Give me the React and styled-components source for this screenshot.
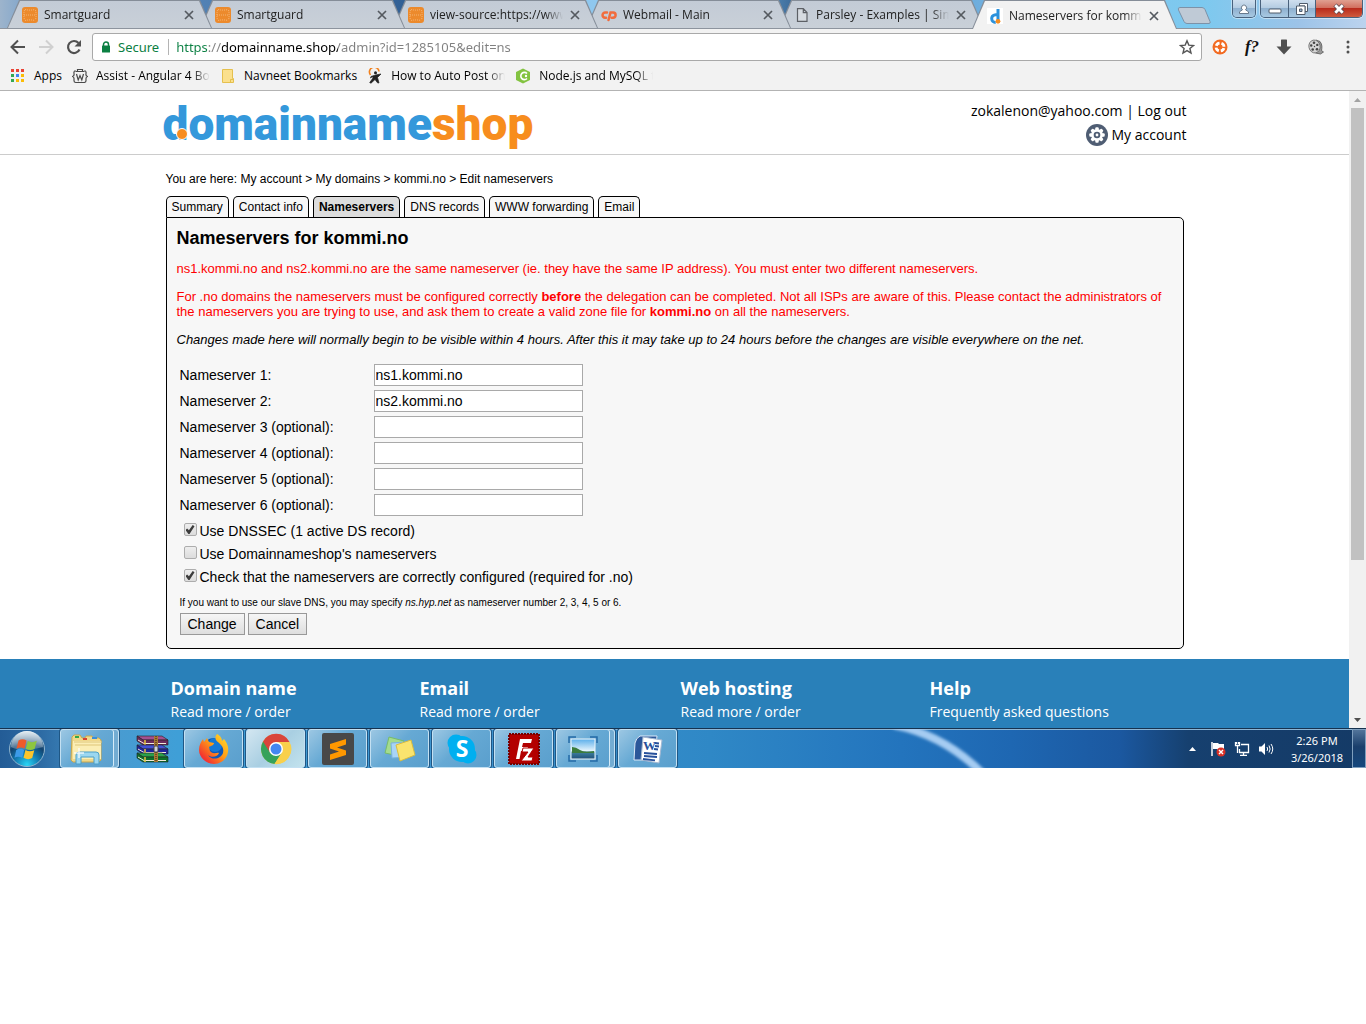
import React, { useState } from "react";
import styled, { createGlobalStyle, css } from "styled-components";

const ui = '"Open Sans", "Noto Sans", sans-serif';
const body = '"Liberation Sans", Arial, sans-serif';

const Global = createGlobalStyle`
  *, *::before, *::after { box-sizing: border-box; }
  body { margin: 0; background: #fff; color: #000; font-family: ${body}; }
  button, input { font: inherit; }
  a { color: inherit; text-decoration: none; }
  svg { display: block; flex: none; }
`;

const fade = css`
  overflow: hidden;
  white-space: nowrap;
  mask-image: linear-gradient(to right, #000 calc(100% - 18px), transparent);
`;

/* ---------- browser window ---------- */

const Desktop = styled.div`
  display: flex;
  flex-direction: column;
`;

const TitleBar = styled.header`
  position: relative;
  display: flex;
  align-items: flex-end;
  height: 29px;
  padding-left: 7px;
  border-bottom: 1px solid #8d949e;
  font: 12px/16px ${ui};
  background: linear-gradient(to right, #9db4cc 0, #6d9ccb 3%, #4f7fb2 16%, #315f94 30%, #8fc6ee 42%, #8ed0f5 52%, #3d6c9b 58%, #6ba9da 70%, #84c6ee 80%, #7cc9ef 88%, #9cc3e8 95%, #bcd3ee 100%);
`;

const TabList = styled.nav`
  display: flex;
  flex: 0 1 1170px;
  min-width: 0;
  height: 28px;
`;

const BrowserTab = styled.div`
  position: relative;
  z-index: ${(p) => p.$order};
  display: flex;
  flex: 0 1 205px;
  align-items: center;
  min-width: 0;
  height: ${(p) => (p.$active ? 29 : 28)}px;
  margin-right: -12px;
  padding: 2px 18px 0 15px;
  color: #222;
  &::before,
  &::after {
    content: "";
    position: absolute;
    z-index: -1;
    clip-path: polygon(12px 0, calc(100% - 12px) 0, 100% 100%, 0 100%);
  }
  &::before { inset: 0; background: #858d98; }
  &::after {
    inset: 1px 1px 0;
    background: ${(p) => (p.$active ? "#f2f2f2" : "linear-gradient(#c3cbd6, #c9d0d8)")};
  }
`;

const TabTitle = styled.a`
  ${fade}
  flex: 1;
  margin: 0 7px 0 6px;
`;

const IconButton = styled.button`
  display: grid;
  place-items: center;
  flex: none;
  min-width: 10px;
  padding: 0;
  border: 0;
  background: none;
  color: #555;
`;

const NewTab = styled.button`
  width: 34px;
  height: 17px;
  margin: 0 0 4px 0;
  padding: 0;
  border: 0;
  background: none;
`;

const WindowControls = styled.div`
  display: flex;
  gap: 4px;
  align-self: flex-start;
  margin-left: auto;
  padding-right: 3px;
`;

const ControlGroup = styled.div`
  display: flex;
  height: 18px;
  overflow: hidden;
  border: 1px solid #49617c;
  border-top: 0;
  border-radius: 0 0 5px 5px;
  box-shadow: 0 0 0 1px #ffffff70;
`;

const ControlButton = styled.button`
  display: grid;
  place-items: center;
  width: ${(p) => p.$width}px;
  padding: 0;
  border: 0;
  border-left: ${(p) => (p.$divided ? "1px solid #49617c" : "0")};
  background: ${(p) =>
    p.$danger
      ? "linear-gradient(#e0a091 0, #d2705f 45%, #b92c1c 50%, #cf5a3e 100%)"
      : "linear-gradient(#cfdfee 0, #b4cce2 45%, #8fb0cf 50%, #a8c9e2 100%)"};
`;

const Toolbar = styled.div`
  display: flex;
  align-items: center;
  gap: 10px;
  padding: 4px 10px 0;
  background: #f2f2f2;
`;

const NavButtons = styled.div`
  display: flex;
  gap: 12px;
`;

const Extensions = styled.div`
  display: flex;
  gap: 16px;
`;

const AddressBox = styled.div`
  display: flex;
  flex: 1;
  align-items: center;
  min-width: 0;
  height: 28px;
  padding: 0 6px 0 8px;
  border: 1px solid #a9a9a9;
  border-radius: 3px;
  background: #fff;
  font: 13px/20px "Noto Sans", "Open Sans", sans-serif;
`;

const Secure = styled.span`
  display: flex;
  align-items: center;
  gap: 7px;
  margin-right: 7px;
  padding-right: 9px;
  border-right: 1px solid #b4b4b4;
  color: #0b8043;
  line-height: 16px;
`;

const AddressInput = styled.input`
  flex: 1;
  min-width: 0;
  padding: 0;
  border: 0;
  outline: 0;
  color: transparent;
  background: linear-gradient(to right, #0b8043 0 32px, #808080 32px 46px, #000 46px 162px, #808080 162px) text;
`;

const BookmarkBar = styled.nav`
  display: flex;
  align-items: center;
  gap: 10px;
  height: 30px;
  padding: 0 10px;
  border-bottom: 1px solid #b3b3b3;
  background: #f2f2f2;
  font: 12px/16px ${ui};
`;

const Bookmark = styled.a`
  display: flex;
  align-items: center;
  gap: 8px;
`;

const BookmarkTitle = styled.span`
  white-space: nowrap;
  ${(p) => p.$clipped && css`${fade} width: 114px;`}
`;

const Viewport = styled.div`
  display: flex;
`;

const ScrollTrack = styled.div`
  display: flex;
  flex: none;
  flex-direction: column;
  width: 17px;
  background: #f1f1f1;
`;

const ScrollButton = styled.button`
  display: grid;
  place-items: center;
  height: 17px;
  padding: 0;
  border: 0;
  background: none;
`;

const ScrollThumb = styled.div`
  flex: 3;
  margin: 0 2px;
  background: #c1c1c1;
`;

const ScrollRest = styled.div`
  flex: 1;
`;

/* ---------- web page ---------- */

const Page = styled.div`
  flex: 1;
  min-width: 0;
  background: #fff;
`;

const SiteHeader = styled.header`
  border-bottom: 1px solid #ccc;
`;

const HeaderInner = styled.div`
  display: flex;
  justify-content: space-between;
  max-width: 1024px;
  height: 63px;
  margin: 0 auto;
  padding-top: 8px;
`;

const Logo = styled.a`
  position: relative;
  color: #3498db;
  font: 900 46px/50px Roboto, sans-serif;
`;

const LogoAccent = styled.span`
  color: #f78d1e;
`;

const LogoDot = styled.span`
  position: absolute;
  left: 13px;
  top: 29px;
  width: 12px;
  height: 12px;
  border: 1px solid #fff;
  border-radius: 50%;
  background: #f78d1e;
`;

const AccountLinks = styled.div`
  display: flex;
  flex-direction: column;
  align-items: flex-end;
  font: 14px/24px ${ui};
`;

const AccountLink = styled.a`
  display: flex;
  align-items: center;
  gap: 3px;
`;

const Main = styled.main`
  max-width: 1018px;
  margin: 0 auto;
  padding: 16px 0 10px;
`;

const Breadcrumb = styled.nav`
  margin-bottom: 9px;
  font-size: 12px;
  line-height: 16px;
`;

const PageTabs = styled.nav`
  display: flex;
  gap: 4px;
  font-size: 12px;
  line-height: 19px;
`;

const PageTab = styled.a`
  padding: 1px 5px 0;
  border: 1px solid #000;
  border-bottom: 0;
  border-radius: 5px 5px 0 0;
  background: ${(p) => (p.$active ? "#ddd" : "#f7f7f7")};
  font-weight: ${(p) => (p.$active ? 700 : 400)};
`;

const Panel = styled.section`
  padding: 10px 10px 13px;
  border: 1px solid #000;
  border-radius: 0 5px 5px 5px;
  background: #f7f7f7;
`;

const Heading = styled.h1`
  margin: 0 0 13px;
  font-size: 18px;
  line-height: 20px;
`;

const Notice = styled.p`
  margin: 0 0 13px;
  color: ${(p) => (p.$error ? "#f00" : "#000")};
  font-size: 13px;
  font-style: ${(p) => (p.$error ? "normal" : "italic")};
  line-height: 15px;
`;

const Form = styled.form`
  padding: 4px 3px 0;
  font-size: 14px;
  line-height: 22px;
`;

const Field = styled.div`
  display: grid;
  grid-template-columns: 194px 209px;
  margin-bottom: 4px;
`;

const TextInput = styled.input`
  height: 22px;
  padding: 1px;
  border: 1px solid #a9a9a9;
  background: #fff;
  font-size: 14px;
`;

const CheckRow = styled.div`
  display: flex;
  gap: 3px;
  padding-left: 4px;
  line-height: 23px;
`;

const Checkbox = styled.input`
  position: relative;
  width: 13px;
  height: 13px;
  margin: 3px 0 0;
  appearance: none;
  border: 1px solid #adadad;
  border-radius: 2px;
  background: linear-gradient(#eee, #dcdcdc);
  &:checked::after {
    content: "";
    position: absolute;
    inset: 1px;
    background: #3c3c3c;
    clip-path: polygon(0 55%, 18% 38%, 38% 58%, 80% 0, 100% 14%, 45% 100%, 32% 100%);
  }
`;

const Hint = styled.p`
  margin: 8px 0 4px;
  font-size: 10px;
  line-height: 12px;
`;

const Actions = styled.div`
  display: flex;
  gap: 3px;
`;

const FormButton = styled.button`
  height: 22px;
  padding: 0 7px;
  border: 1px solid #999;
  background: linear-gradient(#f6f6f6, #dedede);
  color: #000;
  font-size: 14px;
  line-height: 20px;
`;

const SiteFooter = styled.footer`
  background: #2980b9;
  color: #fff;
  font-family: ${ui};
`;

const FooterInner = styled.div`
  display: grid;
  grid-template-columns: 249px 261px 249px 1fr;
  max-width: 1018px;
  margin: 0 auto;
  padding: 17px 5px 4px;
`;

const FooterTitle = styled.h2`
  margin: 0;
  font-size: 18px;
  line-height: 24px;
`;

const FooterLink = styled.a`
  font-size: 14px;
  line-height: 24px;
`;

/* ---------- taskbar ---------- */

const Taskbar = styled.footer`
  position: relative;
  display: flex;
  height: 40px;
  overflow: hidden;
  border-top: 1px solid #16324f;
  background: linear-gradient(to right, #235c96 0, #2d6ba4 3%, #4a9bd0 8%, #3f9fd7 13%, #3d93cf 35%, #2f88c6 52%, #2374bd 66%, #1e67b2 74%, #1b58a0 82%, #16406f 87%, #143a66 100%);
  box-shadow: inset 0 1px 0 #8db6d6;
`;

const Streak = styled.svg`
  position: absolute;
  left: 64%;
  top: 0;
`;

const StartButton = styled.button`
  width: 60px;
  padding: 0 0 0 8px;
  border: 0;
  background: none;
`;

const Apps = styled.div`
  display: flex;
  gap: 3px;
`;

const AppButton = styled.button`
  display: grid;
  place-items: center;
  width: 59px;
  padding: ${(p) => (p.$stacked ? "0 6px 0 0" : "0")};
  border: 1px solid ${(p) => (p.$plain ? "transparent" : "#c3e0f2")};
  border-radius: 3px;
  background: ${(p) =>
    p.$plain ? "none" : p.$active ? "linear-gradient(135deg, #d3e6f1, #a9cfe2 50%, #c3e3ee)" : "linear-gradient(135deg, #9cc7e3, #66a9d4 45%, #5a9fcd)"};
  box-shadow: ${(p) => (p.$plain ? "none" : p.$stacked ? "inset -4px 0 0 #73acd2, inset -5px 0 0 #d5ebf8, 0 0 0 1px #1f5785" : "0 0 0 1px #1f5785")};
`;

const Tray = styled.div`
  position: relative;
  display: flex;
  align-items: center;
  gap: 8px;
  margin-left: auto;
  color: #fff;
`;

const Clock = styled.time`
  display: grid;
  width: 70px;
  text-align: center;
  font: 11px/17px "Noto Sans", "Open Sans", sans-serif;
`;

const ShowDesktop = styled.button`
  align-self: stretch;
  width: 14px;
  margin-left: -8px;
  padding: 0;
  border: 1px solid #7f9fbe;
  background: linear-gradient(#52749a, #1a3f6c 45%, #15477d);
`;

const TrayArrow = styled.span`
  margin-right: 6px;
`;

/* ---------- icons ---------- */

const CloseIcon = () => (
  <svg width="10" height="10" viewBox="0 0 10 10"><path d="M1 1l8 8M9 1L1 9" stroke="#555a60" strokeWidth="1.7" /></svg>
);
const Smart = () => (
  <svg width="16" height="16" viewBox="0 0 16 16">
    <rect width="16" height="16" rx="3" fill="#ec8a2c" />
    <path d="M3 2.500c3 .8 7 .8 10 0M3 13.500c3-.8 7-.8 10 0M2.500 3c-.8 3-.8 7 0 10M13.500 3c.8 3 .8 7 0 10M2 8h12" fill="none" stroke="#f8c086" strokeWidth=".8" strokeDasharray="1 1" />
  </svg>
);
const CPanel = () => (
  <svg width="16" height="16" viewBox="0 0 16 16" fill="none" stroke="#f26c3d" strokeWidth="2.5" strokeLinecap="round">
    <path d="M6 5.500H4.300a2.600 2.600 0 0 0-.3 5.200h1M7.500 13l2-7.500h2.600a2.600 2.600 0 0 1-.2 5.200h-1.200" />
  </svg>
);
const FileIcon = () => (
  <svg width="16" height="16" viewBox="0 0 16 16" fill="#d6dbe1" stroke="#5d6066" strokeWidth="1.2"><path d="M3.500 1.700h5.800l3.700 3.800v8.800H3.500zM9.300 1.700v4H13" /></svg>
);
const DIcon = () => (
  <svg width="16" height="16" viewBox="0 0 16 16">
    <rect width="16" height="16" fill="#fff" />
    <path d="M11 1v12.500M11 7.500c-2-1.300-6.300-.8-6.300 3 0 2.500 1.800 4 4 4" fill="none" stroke="#2c92dc" strokeWidth="3" />
    <circle cx="11" cy="13.300" r="2.400" fill="#f78d1e" />
  </svg>
);
const NewTabShape = () => (
  <svg width="34" height="17" viewBox="0 0 34 17"><path d="M3 .5h22q2 0 3 2l5 12q.8 2-1 2H10q-2 0-3-2L1.500 3Q.500.500 3 .500z" fill="#bfcad6" stroke="#7c92a8" /></svg>
);
const UserIcon = () => (
  <svg width="12" height="12" viewBox="0 0 12 12" fill="#fff" stroke="#5c6e82" strokeWidth=".9"><path d="M1.500 10.500V8.800l3-2a2.600 2.600 0 1 1 3 0l3 2v1.700z" /></svg>
);
const MinIcon = () => (
  <svg width="14" height="12" viewBox="0 0 14 12"><rect x="1" y="6" width="12" height="4" rx="1" fill="#fff" stroke="#505c6b" /></svg>
);
const MaxIcon = () => (
  <svg width="14" height="14" viewBox="0 0 14 14">
    <path d="M4.500 1.500h8v8h-2.500v-5.500h-5.500z" fill="#fff" stroke="#505c6b" />
    <path d="M1.500 4h8.500v8.500H1.500zM4.500 7v2.500H7V7z" fill="#fff" fillRule="evenodd" stroke="#505c6b" />
  </svg>
);
const WinClose = () => (
  <svg width="14" height="12" viewBox="0 0 14 12" fill="none"><path d="M3 2l8 8M11 2l-8 8" stroke="#5a4850" strokeWidth="4.500" /><path d="M3.300 2.200l7.400 7.600M10.700 2.200L3.300 9.800" stroke="#fff" strokeWidth="2.800" /></svg>
);
const Arrow = ({ forward }) => (
  <svg width="16" height="16" viewBox="0 0 16 16" fill="none" stroke={forward ? "#d0d0d0" : "#505050"} strokeWidth="2">
    <path d={forward ? "M1 8h13M8 1.500L14.500 8 8 14.500" : "M15 8H2M8 1.500L1.500 8 8 14.500"} />
  </svg>
);
const Reload = () => (
  <svg width="16" height="16" viewBox="0 0 16 16"><path d="M13.500 10.500A6 6 0 1 1 12.500 4" fill="none" stroke="#505050" strokeWidth="2.200" /><path d="M15 1v6.500H8.500z" fill="#505050" /></svg>
);
const LockIcon = () => (
  <svg width="10" height="12" viewBox="0 0 10 12"><path d="M2.500 5V3.500a2.500 2.500 0 0 1 5 0V5" fill="none" stroke="#0b8043" strokeWidth="1.500" /><rect x="1" y="4.500" width="8" height="7" rx=".6" fill="#0b8043" /></svg>
);
const StarIcon = () => (
  <svg width="16" height="16" viewBox="0 0 16 16"><path d="M8 1.800l1.800 4.300 4.700.4-3.600 3 1.100 4.600L8 11.600l-4 2.500 1.100-4.600-3.600-3 4.700-.4z" fill="none" stroke="#555" strokeWidth="1.400" /></svg>
);
const OrangeExt = () => (
  <svg width="16" height="16" viewBox="0 0 16 16">
    <circle cx="8" cy="8" r="7.500" fill="#f26a21" />
    <circle cx="8" cy="8" r="4" fill="none" stroke="#fff" strokeWidth="2.800" strokeDasharray="4.300 1.980" transform="rotate(15 8 8)" />
  </svg>
);
const DownExt = () => (
  <svg width="16" height="16" viewBox="0 0 16 16"><path d="M5 1q0-.6.600-.600h4.800q.6 0 .6.600v6.500h4.500L8 15.500.500 7.500H5z" fill="#505050" /></svg>
);
const ReelExt = () => (
  <svg width="16" height="16" viewBox="0 0 16 16">
    <path d="M8 1l4 1.500c2.500 3 2 6.500 1.500 9l2 1.500-3 2-5-1" fill="#999" stroke="#555" strokeWidth=".8" />
    <ellipse cx="6.500" cy="7.500" rx="5.600" ry="6.500" fill="#d4d4d4" stroke="#666" strokeWidth=".8" transform="rotate(-12 6.500 7.500)" />
    <g fill="#444"><circle cx="6" cy="3.700" r="1.300" /><circle cx="3.200" cy="6.500" r="1.200" /><circle cx="9.300" cy="5.900" r="1.200" /><circle cx="4.700" cy="10.500" r="1.300" /><circle cx="9" cy="10.200" r="1.300" /><circle cx="6.500" cy="7.500" r=".7" /></g>
  </svg>
);
const Dots = () => (
  <svg width="16" height="16" viewBox="0 0 16 16" fill="#505050"><circle cx="8" cy="3" r="1.500" /><circle cx="8" cy="8" r="1.500" /><circle cx="8" cy="13" r="1.500" /></svg>
);
const Fn = styled.span`
  width: 16px;
  color: #111;
  font: italic 700 17px/16px "Liberation Serif", serif;
`;
const AppsGrid = () => (
  <svg width="16" height="16" viewBox="0 0 16 16">
    {["#ea4335", "#ea4335", "#ea4335", "#34a853", "#4285f4", "#fbbc05", "#34a853", "#fbbc05", "#fbbc05"].map((c, i) => (
      <rect key={i} x={1 + (i % 3) * 5} y={1 + Math.floor(i / 3) * 5} width="3" height="3" fill={c} />
    ))}
  </svg>
);
const WIcon = () => (
  <svg width="16" height="16" viewBox="0 0 16 16" fill="none" stroke="#4a4a4a" strokeWidth="1.200">
    <path d="M5.500 3V1.500h5V3M3.500 2.500Q1.500 3 2 5.500T.500 8.500Q2.300 9 2 11.500t1.500 3M12.500 2.500Q14.500 3 14 5.500t1.500 3Q13.700 9 14 11.500t-1.500 3M3.500 3.500h9M3.500 14.500h9M4.500 6l1.700 6L8 7.500 9.800 12l1.700-6" />
  </svg>
);
const FolderIcon = () => (
  <svg width="16" height="16" viewBox="0 0 16 16"><path d="M2.500 1.500h10v9h1v4h-11z" fill="#fbe08d" stroke="#e5c04e" /><path d="M10.500 14.500v-3h3" fill="none" stroke="#e5c04e" /></svg>
);
const RunnerIcon = () => (
  <svg width="16" height="16" viewBox="0 0 16 16">
    <path d="M3.500 7a4.800 4.800 0 1 1 8.500-3.500" fill="none" stroke="#f2811d" strokeWidth="1.600" />
    <circle cx="8.500" cy="4.800" r="1.500" fill="#222" />
    <path d="M4 8.500l4.500-1.500 5.500-1-3.500 3.500L12 15l-1.500-.2-2.500-3.300-4 3.700-1.300-.6L6 10l-.5-1.500L3.500 10z" fill="#222" stroke="#222" strokeWidth=".7" />
  </svg>
);
const NodeIcon = () => (
  <svg width="16" height="16" viewBox="0 0 16 16"><path d="M8 .5L15 4v8l-7 3.500L1 12V4z" fill="#83c341" /><path d="M12 5.500a3.600 3.600 0 1 0 0 5" fill="none" stroke="#fff" strokeWidth="1.600" /><circle cx="11" cy="8" r="1.200" fill="#fff" /></svg>
);
const GearBadge = () => (
  <svg width="22" height="22" viewBox="0 0 22 22">
    <circle cx="11" cy="11" r="11" fill="#4f5d73" />
    <g fill="#fff">
      {[0, 45, 90, 135].map((a) => <rect key={a} x="9.300" y="3.300" width="3.400" height="15.400" rx="1" transform={`rotate(${a} 11 11)`} />)}
      <circle cx="11" cy="11" r="5.900" />
    </g>
    <circle cx="11" cy="11" r="3.300" fill="#4f5d73" /><circle cx="11" cy="11" r="1.400" fill="#fff" />
  </svg>
);
const Triangle = ({ down, color }) => (
  <svg width="7" height="4" viewBox="0 0 7 4"><path d={down ? "M0 0h7L3.500 4z" : "M0 4h7L3.500 0z"} fill={color} /></svg>
);

const StartOrb = () => (
  <svg width="38" height="38" viewBox="0 0 38 38">
    <defs>
      <radialGradient id="orb" cx=".5" cy=".95" r=".95"><stop offset="0" stopColor="#28d6f5" /><stop offset=".35" stopColor="#137fb5" /><stop offset=".65" stopColor="#12436f" /><stop offset="1" stopColor="#6f97b5" /></radialGradient>
      <linearGradient id="shine" x2="0" y2="1"><stop stopColor="#fff" stopOpacity=".8" /><stop offset="1" stopColor="#fff" stopOpacity=".2" /></linearGradient>
    </defs>
    <circle cx="19" cy="19" r="17.500" fill="url(#orb)" stroke="#8fb4ce" />
    <path d="M3 17a16 16 0 0 1 32 0c-8 2-24 5-32 0z" fill="url(#shine)" />
    <path d="M10.500 10.500q4-2.500 8 0l-2 8q-4-2-8 .2z" fill="#ee5a2a" />
    <path d="M19.800 11q4 2.400 9-.2l-2.200 8.200q-4.500 2.300-8.800-.2z" fill="#8dc63f" />
    <path d="M8.200 20q4-2.300 8 0l-2 7.800q-4-2-7.700 0z" fill="#3c9be8" />
    <path d="M17.500 20q4 2.400 8.800.2l-2.100 7.800q-4.200 2.400-8.700-.2z" fill="#fcc52c" />
  </svg>
);
const Explorer = () => (
  <svg width="34" height="32" viewBox="0 0 34 32">
    <path d="M2 4l2-2h6l2 3h3l1-2h6l1 2h6l2 2v20l-2 2H3l-2-2z" fill="#f0d88a" stroke="#c9a84e" />
    <path d="M3 8h28v18H3z" fill="#fbeeb5" /><path d="M4 9h28M5 12h26" stroke="#dec578" />
    <path d="M5 3h4v2H5z" fill="#31a847" /><path d="M13 5h4v2h-4z" fill="#d84332" /><path d="M22 4h5v2h-5z" fill="#3b8ed8" />
    <path d="M6 31v-9q0-3 3-3h17q3 0 3 3v9h-5v-7H11v7z" fill="#9bd7f0" stroke="#4a9fc8" />
    <path d="M9 15v10M4 20h10" stroke="#fff" strokeWidth="1.500" opacity=".8" />
  </svg>
);
const WinRar = () => (
  <svg width="34" height="28" viewBox="0 0 34 28">
    {[["#a3508f", "#6b2a5c", 1], ["#4450d5", "#20259c", 10], ["#2ba04b", "#0d702b", 18]].map(([a, b, y]) => (
      <g key={y}>
        <path d={`M2 ${y}h25l6 4H8z`} fill={a} stroke="#222" strokeWidth=".6" />
        <path d={`M8 ${y + 4}h25v5H8L2 ${y + 5}v-5z`} fill={b} stroke="#222" strokeWidth=".6" />
        <path d={`M3 ${y + 4}l6 3.500h22`} stroke="#f2ead9" strokeWidth="1" fill="none" />
        <path d={`M10 ${y + 4}v5`} stroke="#e6c23c" strokeWidth="1.500" />
      </g>
    ))}
    <path d="M21 1v26" stroke="#a97834" strokeWidth="4" /><path d="M21 1v26" stroke="#594019" strokeWidth="1.500" strokeDasharray="1 1" /><rect x="19" y="11" width="4" height="6" rx="1" fill="#d0d3d8" stroke="#444" />
  </svg>
);
const Firefox = () => (
  <svg width="32" height="32" viewBox="0 0 32 32">
    <defs><linearGradient id="fox" x1="1" y1="0" x2="0" y2="1"><stop stopColor="#ffe52e" /><stop offset=".45" stopColor="#ff9c16" /><stop offset=".8" stopColor="#f4382f" /><stop offset="1" stopColor="#dd1760" /></linearGradient></defs>
    <circle cx="16" cy="16" r="11" fill="#0d57b8" /><circle cx="17" cy="12" r="7" fill="#1479d6" />
    <path d="M19 1c4 2 5 5 5 7l2-2c3 4 5 8 4 13-1 7-7 12-14 12S1 25 1 17c0-5 2-8 4-11l1 3 3-4 2 4 5 1c0 2-3 3-5 4l1 4c3 4 7 1 9 2-1 4-8 5-11 2 4 6 13 4 15-2 2-7-5-10-7-13-1-2-1-4 1-6z" fill="url(#fox)" />
  </svg>
);
const Chrome = () => (
  <svg width="32" height="32" viewBox="0 0 32 32">
    <circle cx="16" cy="16" r="15" fill="#f9d04b" />
    <path d="M16 16L3 8.500A15 15 0 0 0 14.500 31L22 19.500z" fill="#35a25a" /><path d="M16 9h13.500A15 15 0 0 1 14.500 31L22 19.500z" fill="#f9d04b" /><path d="M16 9h13.500A15 15 0 0 0 3 8.500l7 11z" fill="#d9453a" />
    <circle cx="16" cy="16" r="7" fill="#fff" /><circle cx="16" cy="16" r="5.500" fill="#4387f2" />
  </svg>
);
const Sublime = () => (
  <svg width="32" height="32" viewBox="0 0 32 32"><rect width="32" height="32" rx="2" fill="#484848" /><path d="M8 11l16-5v5.500l-9 3 9 3V22L8 27v-5.500l9-3-9-3z" fill="#ff9800" /></svg>
);
const Notes = () => (
  <svg width="34" height="28" viewBox="0 0 34 28"><path d="M6 2l15 4-5 15-14-3z" fill="#a4dc8e" stroke="#78bb69" /><path d="M8 8l15-1 1 15-15 1z" fill="#a8d4f7" stroke="#79b3dd" /><path d="M13 10l15-5 4 15-15 6z" fill="#fae46e" stroke="#d9bd3f" /></svg>
);
const Skype = () => (
  <svg width="32" height="32" viewBox="0 0 32 32"><circle cx="10" cy="10" r="8.500" fill="#00aff0" /><circle cx="22" cy="22" r="8.500" fill="#00aff0" /><circle cx="16" cy="16" r="13" fill="#00aff0" /><text x="16" y="24" textAnchor="middle" fontFamily="Open Sans" fontWeight="700" fontSize="23" fill="#fff">S</text></svg>
);
const FileZilla = () => (
  <svg width="32" height="32" viewBox="0 0 32 32"><rect x="1" y="1" width="30" height="30" fill="#b30000" stroke="#700" strokeWidth="2" strokeDasharray="2 1" /><path d="M8 26l4-20h12l-1 4h-8l-1 4h6l-1 4h-6l-1.500 8z" fill="#fff" /><path d="M15 15h11l-6 9h5l-1 4H13l7-9h-6z" fill="#fff" stroke="#b30000" /></svg>
);
const Picture = () => (
  <svg width="30" height="26" viewBox="0 0 30 26">
    <defs><linearGradient id="sky" x2="0" y2="1"><stop stopColor="#5aaeea" /><stop offset=".6" stopColor="#e8f5fc" /><stop offset=".65" stopColor="#3f7f9f" /><stop offset="1" stopColor="#1f5079" /></linearGradient></defs>
    <path d="M1 7V1h7M22 1h7v6M29 19v6h-7M8 25H1v-6" fill="#6ea8d4" stroke="#246ba7" strokeWidth="1.500" /><rect x="3" y="3" width="24" height="20" fill="url(#sky)" stroke="#eef7fb" /><path d="M4 11q4 0 8 3t14 1v2H4z" fill="#3b7b3d" />
  </svg>
);
const Word = () => (
  <svg width="32" height="32" viewBox="0 0 32 32"><path d="M8 3h17l-3 24H2l1-17q1-5 5-7z" fill="#2b579a" stroke="#dce9f8" /><path d="M11 4l19 3-3 23-18-3z" fill="#fff" stroke="#a4b8d2" /><text x="11" y="17" fontFamily="Liberation Serif" fontWeight="700" fontSize="13" fill="#27509b">W</text><path d="M23 10l4 .5M23 13l4 .5M22 16l4 .5M12 20l13 1M12 23l13 1M11 26l12 1.300" stroke="#27509b" strokeWidth="1.800" /></svg>
);
const FlagIcon = () => (
  <svg width="16" height="16" viewBox="0 0 16 16"><path d="M2 1v14" stroke="#fff" strokeWidth="1.500" /><path d="M3 2h5l1 1h5v6H8L7 8H3z" fill="#fff" /><circle cx="11" cy="11" r="4.500" fill="#d93025" /><path d="M9 9l4 4M13 9l-4 4" stroke="#fff" strokeWidth="1.400" /></svg>
);
const NetIcon = () => (
  <svg width="16" height="16" viewBox="0 0 16 16" fill="none" stroke="#fff" strokeWidth="1.300"><path d="M7 3.500h7.500v8h-9V8M6 14.300h7M9.500 12v2M1.500 1v3.500h4V1M3.500 4.500v7.500M2.500 1v2M4.500 1v2" /></svg>
);
const SpeakerIcon = () => (
  <svg width="16" height="16" viewBox="0 0 16 16"><path d="M1 5.500h2.500L7 2v12l-3.500-3.500H1z" fill="#fff" /><path d="M9 6q1.300 2 0 4M11 4.500q2.300 3.500 0 7M13 3q3.500 5 0 10" fill="none" stroke="#fff" /></svg>
);

/* ---------- data ---------- */

const browserTabs = [
  ["Smartguard", Smart],
  ["Smartguard", Smart],
  ["view-source:https://www", Smart],
  ["Webmail - Main", CPanel],
  ["Parsley - Examples | Simp", FileIcon],
  ["Nameservers for kommi.n", DIcon],
];
const bookmarks = [
  ["Apps", AppsGrid],
  ["Assist - Angular 4 Boo", WIcon, true],
  ["Navneet Bookmarks", FolderIcon],
  ["How to Auto Post on", RunnerIcon, true],
  ["Node.js and MySQL tu", NodeIcon, true],
];
const pageTabs = ["Summary", "Contact info", "Nameservers", "DNS records", "WWW forwarding", "Email"];
const crumbs = ["My account", "My domains", "kommi.no", "Edit nameservers"];
const checks = [
  ["Use DNSSEC (1 active DS record)", true],
  ["Use Domainnameshop's nameservers", false],
  ["Check that the nameservers are correctly configured (required for .no)", true],
];
const footerColumns = [
  ["Domain name", "Read more / order"],
  ["Email", "Read more / order"],
  ["Web hosting", "Read more / order"],
  ["Help", "Frequently asked questions"],
];
const taskbarApps = [
  { name: "Windows Explorer", Icon: Explorer, stacked: true },
  { name: "WinRAR", Icon: WinRar, plain: true },
  { name: "Firefox", Icon: Firefox },
  { name: "Chrome", Icon: Chrome, active: true },
  { name: "Sublime Text", Icon: Sublime },
  { name: "Sticky Notes", Icon: Notes },
  { name: "Skype", Icon: Skype },
  { name: "FileZilla", Icon: FileZilla },
  { name: "Photo Viewer", Icon: Picture, stacked: true },
  { name: "Word", Icon: Word },
];

function BrowserChrome() {
  return (
    <>
      <TitleBar>
        <TabList aria-label="Browser tabs">
          {browserTabs.map(([title, Icon], i) => (
            <BrowserTab key={i} $active={i === 5} $order={i === 5 ? 9 : 6 - i}>
              <Icon />
              <TabTitle href="#">{title}</TabTitle>
              <IconButton aria-label="Close tab"><CloseIcon /></IconButton>
            </BrowserTab>
          ))}
        </TabList>
        <NewTab aria-label="New tab"><NewTabShape /></NewTab>
        <WindowControls>
          <ControlGroup><ControlButton $width={22} aria-label="User"><UserIcon /></ControlButton></ControlGroup>
          <ControlGroup>
            <ControlButton $width={27} aria-label="Minimize"><MinIcon /></ControlButton>
            <ControlButton $width={27} $divided aria-label="Restore"><MaxIcon /></ControlButton>
            <ControlButton $width={47} $divided $danger aria-label="Close"><WinClose /></ControlButton>
          </ControlGroup>
        </WindowControls>
      </TitleBar>
      <Toolbar>
        <NavButtons>
          <IconButton aria-label="Back"><Arrow /></IconButton>
          <IconButton aria-label="Forward"><Arrow forward /></IconButton>
          <IconButton aria-label="Reload"><Reload /></IconButton>
        </NavButtons>
        <AddressBox>
          <Secure><LockIcon />Secure</Secure>
          <AddressInput aria-label="Address" defaultValue="https://domainname.shop/admin?id=1285105&edit=ns" spellCheck={false} />
          <IconButton aria-label="Bookmark this page"><StarIcon /></IconButton>
        </AddressBox>
        <Extensions>
          <IconButton aria-label="Extension"><OrangeExt /></IconButton>
          <IconButton aria-label="Font finder"><Fn>f?</Fn></IconButton>
          <IconButton aria-label="Downloads"><DownExt /></IconButton>
          <IconButton aria-label="Video"><ReelExt /></IconButton>
          <IconButton aria-label="Menu"><Dots /></IconButton>
        </Extensions>
      </Toolbar>
      <BookmarkBar aria-label="Bookmarks">
        {bookmarks.map(([title, Icon, clipped]) => (
          <Bookmark key={title} href="#"><Icon /><BookmarkTitle $clipped={clipped}>{title}</BookmarkTitle></Bookmark>
        ))}
      </BookmarkBar>
    </>
  );
}

function NameserverForm() {
  const [servers, setServers] = useState(["ns1.kommi.no", "ns2.kommi.no", "", "", "", ""]);
  const update = (i, value) => setServers(servers.map((s, n) => (n === i ? value : s)));
  return (
    <Form onSubmit={(e) => e.preventDefault()}>
      {servers.map((value, i) => (
        <Field key={i}>
          <label htmlFor={`ns${i}`}>{`Nameserver ${i + 1}${i > 1 ? " (optional)" : ""}:`}</label>
          <TextInput id={`ns${i}`} value={value} onChange={(e) => update(i, e.target.value)} />
        </Field>
      ))}
      {checks.map(([label, on], i) => (
        <CheckRow key={label}>
          <Checkbox type="checkbox" id={`check${i}`} defaultChecked={on} />
          <label htmlFor={`check${i}`}>{label}</label>
        </CheckRow>
      ))}
      <Hint>If you want to use our slave DNS, you may specify <i>ns.hyp.net</i> as nameserver number 2, 3, 4, 5 or 6.</Hint>
      <Actions>
        <FormButton type="submit">Change</FormButton>
        <FormButton type="button">Cancel</FormButton>
      </Actions>
    </Form>
  );
}

function ShopPage() {
  return (
    <Page>
      <SiteHeader>
        <HeaderInner>
          <Logo href="#">domainname<LogoAccent>shop</LogoAccent><LogoDot /></Logo>
          <AccountLinks>
            <span>zokalenon@yahoo.com | <a href="#">Log out</a></span>
            <AccountLink href="#"><GearBadge />My account</AccountLink>
          </AccountLinks>
        </HeaderInner>
      </SiteHeader>
      <Main>
        <Breadcrumb aria-label="Breadcrumb">
          You are here: {crumbs.map((c, i) => <React.Fragment key={c}>{i > 0 && " > "}<a href="#">{c}</a></React.Fragment>)}
        </Breadcrumb>
        <PageTabs aria-label="Domain settings">
          {pageTabs.map((t) => <PageTab key={t} href="#" $active={t === "Nameservers"}>{t}</PageTab>)}
        </PageTabs>
        <Panel>
          <Heading>Nameservers for kommi.no</Heading>
          <Notice $error>ns1.kommi.no and ns2.kommi.no are the same nameserver (ie. they have the same IP address). You must enter two different nameservers.</Notice>
          <Notice $error>
            For .no domains the nameservers must be configured correctly <b>before</b> the delegation can be completed. Not all ISPs are aware of this. Please contact the administrators of the nameservers you are trying to use, and ask them to create a valid zone file for <b>kommi.no</b> on all the nameservers.
          </Notice>
          <Notice>Changes made here will normally begin to be visible within 4 hours. After this it may take up to 24 hours before the changes are visible everywhere on the net.</Notice>
          <NameserverForm />
        </Panel>
      </Main>
      <SiteFooter>
        <FooterInner>
          {footerColumns.map(([title, link]) => (
            <div key={title}><FooterTitle>{title}</FooterTitle><FooterLink href="#">{link}</FooterLink></div>
          ))}
        </FooterInner>
      </SiteFooter>
    </Page>
  );
}

export default function App() {
  return (
    <Desktop>
      <Global />
      <BrowserChrome />
      <Viewport>
        <ShopPage />
        <ScrollTrack>
          <ScrollButton aria-label="Scroll up"><Triangle color="#a3a3a3" /></ScrollButton>
          <ScrollThumb />
          <ScrollRest />
          <ScrollButton aria-label="Scroll down"><Triangle down color="#505050" /></ScrollButton>
        </ScrollTrack>
      </Viewport>
      <Taskbar>
        <Streak width="130" height="40" viewBox="0 0 130 40" fill="none" aria-hidden="true">
          <defs><filter id="soft"><feGaussianBlur stdDeviation="1.800" /></filter></defs>
          <path d="M20-4Q70 6 108 44" stroke="#a5ccf2" strokeWidth="8" filter="url(#soft)" />
        </Streak>
        <StartButton aria-label="Start"><StartOrb /></StartButton>
        <Apps>
          {taskbarApps.map(({ name, Icon, active, plain, stacked }) => (
            <AppButton key={name} aria-label={name} $active={active} $plain={plain} $stacked={stacked}><Icon /></AppButton>
          ))}
        </Apps>
        <Tray>
          <TrayArrow><Triangle color="#fff" /></TrayArrow>
          <FlagIcon />
          <NetIcon />
          <SpeakerIcon />
          <Clock><span>2:26 PM</span><span>3/26/2018</span></Clock>
          <ShowDesktop aria-label="Show desktop" />
        </Tray>
      </Taskbar>
    </Desktop>
  );
}
